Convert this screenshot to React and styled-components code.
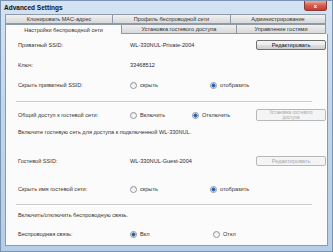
import styled, { createGlobalStyle } from "styled-components";

const Global = createGlobalStyle`
  html, body { margin: 0; padding: 0; }
  body {
    width: 333px;
    height: 252px;
    overflow: hidden;
    font-family: "Liberation Sans", "DejaVu Sans", sans-serif;
  }
`;

const Window = styled.div`
  width: 333px;
  height: 252px;
  box-sizing: border-box;
  display: flex;
  flex-direction: column;
  background: linear-gradient(to bottom, #d3e3f4 0%, #c2d7ee 40%, #b6cde8 100%);
  border: 1px solid #7a93b0;
`;

const TitleBar = styled.div`
  height: 12px;
  display: flex;
  align-items: center;
  padding: 0 3px 0 3px;
`;

const Title = styled.div`
  font-size: 6.5px;
  font-weight: bold;
  color: #111;
  flex: 1;
`;

const CloseBtn = styled.div`
  width: 21px;
  height: 9px;
  margin-top: -2px;
  margin-right: 2px;
  border: 1px solid #8a3a30;
  border-top: none;
  border-radius: 0 0 3px 3px;
  background: linear-gradient(to bottom, #eab0a6 0%, #d65e52 45%, #c53d2e 100%);
  display: flex;
  align-items: center;
  justify-content: center;
  color: #fff;
  font-size: 6px;
  font-weight: bold;
  line-height: 1;
`;

const Body = styled.div`
  flex: 1;
  display: flex;
  flex-direction: column;
  margin: 1px 4px 5px 4px;
`;

const TabRow = styled.div`
  display: flex;
  height: 10px;
  padding-right: 2px;
`;

const Tab = styled.div`
  width: ${(p) => p.$w}px;
  box-sizing: border-box;
  display: flex;
  align-items: center;
  justify-content: center;
  font-size: 5.6px;
  color: #333;
  white-space: nowrap;
  border: 1px solid #8e9aa8;
  border-left: ${(p) => (p.$first ? "1px solid #8e9aa8" : "none")};
  border-bottom: ${(p) => (p.$active ? "none" : "1px solid #8e9aa8")};
  background: ${(p) =>
    p.$active
      ? "#fbfbfb"
      : "linear-gradient(to bottom, #f2f2f2 0%, #e4e4e4 50%, #d9d9d9 100%)"};
`;

const Panel = styled.div`
  flex: 1;
  background: #fbfbfb;
  border: 1px solid #8e9aa8;
  border-top: none;
  padding: 0 1px 0 12px;
  display: flex;
  flex-direction: column;
`;

const Row = styled.div`
  height: ${(p) => p.$h}px;
  margin-top: ${(p) => p.$mt || 0}px;
  display: flex;
  align-items: center;
  font-size: 5.6px;
  color: #333;
  white-space: nowrap;
`;

const Label = styled.div`
  width: 112px;
  flex: none;
`;

const Value = styled.div`
  color: #262c38;
`;

const Separator = styled.div`
  height: 1px;
  width: 296px;
  margin: ${(p) => p.$mt}px 0 ${(p) => p.$mb}px -2px;
  background: #cbcbcb;
  border-bottom: 1px solid #ffffff;
`;

const Spacer = styled.div`
  flex: 1;
`;

const Button = styled.div`
  width: 70px;
  height: ${(p) => (p.$tall ? 12 : 10)}px;
  box-sizing: border-box;
  border: 1px solid ${(p) => (p.$disabled ? "#b5b9bd" : "#707070")};
  border-radius: 2px;
  background: ${(p) =>
    p.$disabled
      ? "#f4f4f4"
      : "linear-gradient(to bottom, #f4f4f4 0%, #ebebeb 50%, #dddddd 51%, #cfcfcf 100%)"};
  color: ${(p) => (p.$disabled ? "#a8a8a8" : "#111")};
  font-size: ${(p) => (p.$tall ? 4.6 : 5.6)}px;
  line-height: ${(p) => (p.$tall ? 5 : 8)}px;
  text-align: center;
  display: flex;
  flex-direction: column;
  justify-content: center;
`;

const RadioOpt = styled.div`
  display: flex;
  align-items: center;
  gap: 3px;
  width: ${(p) => p.$w || 80}px;
`;

const Dot = styled.span`
  width: 5px;
  height: 5px;
  border-radius: 50%;
  border: 1px solid #8d949c;
  background: ${(p) =>
    p.$on
      ? "radial-gradient(circle, #1f4f8f 0%, #3f7cc4 55%, #e8eef5 60%)"
      : "linear-gradient(to bottom, #e9e9e9, #ffffff)"};
  flex: none;
`;

function Radio({ on, w, children }) {
  return (
    <RadioOpt $w={w}>
      <Dot $on={on} />
      <span>{children}</span>
    </RadioOpt>
  );
}

export default function App() {
  return (
    <>
      <Global />
      <Window>
        <TitleBar>
          <Title>Advanced Settings</Title>
          <CloseBtn>x</CloseBtn>
        </TitleBar>
        <Body>
          <TabRow>
            <Tab $w={108} $first>Клонировать MAC-адрес</Tab>
            <Tab $w={118}>Профиль беспроводной сети</Tab>
            <Tab $w={95}>Администрирование</Tab>
          </TabRow>
          <TabRow>
            <Tab $w={117} $first $active>Настройки беспроводной сети</Tab>
            <Tab $w={115}>Установка гостевого доступа</Tab>
            <Tab $w={89}>Управление гостями</Tab>
          </TabRow>
          <Panel>
            <Row $h={21}>
              <Label>Приватный SSID:</Label>
              <Value>WL-330NUL-Private-2004</Value>
              <Spacer />
              <Button>Редактировать</Button>
            </Row>
            <Row $h={20}>
              <Label>Ключ:</Label>
              <Value>33468512</Value>
            </Row>
            <Row $h={20}>
              <Label>Скрыть приватный SSID:</Label>
              <Radio>скрыть</Radio>
              <Radio on>отобразить</Radio>
            </Row>
            <Separator $mt={6} $mb={4} />
            <Row $h={16}>
              <Label>Общий доступ к гостевой сети:</Label>
              <Radio w={62}>Включить</Radio>
              <Radio on w={62}>Отключить</Radio>
              <Spacer />
              <Button $disabled $tall>
                <span>Установка гостевого</span>
                <span>доступа</span>
              </Button>
            </Row>
            <Row $h={18}>Включите гостевую сеть для доступа к подключенной WL-330NUL.</Row>
            <Row $h={18} $mt={11}>
              <Label>Гостевой SSID:</Label>
              <Value>WL-330NUL-Guest-2004</Value>
              <Spacer />
              <Button $disabled>Редактировать</Button>
            </Row>
            <Row $h={20} $mt={9}>
              <Label>Скрыть имя гостевой сети:</Label>
              <Radio>скрыть</Radio>
              <Radio on>отобразить</Radio>
            </Row>
            <Separator $mt={5} $mb={0} />
            <Row $h={18}>Включить/отключить беспроводную связь.</Row>
            <Row $h={20}>
              <Label>Беспроводная связь:</Label>
              <Radio on w={83}>Вкл</Radio>
              <Radio>Откл</Radio>
            </Row>
          </Panel>
        </Body>
      </Window>
    </>
  );
}
